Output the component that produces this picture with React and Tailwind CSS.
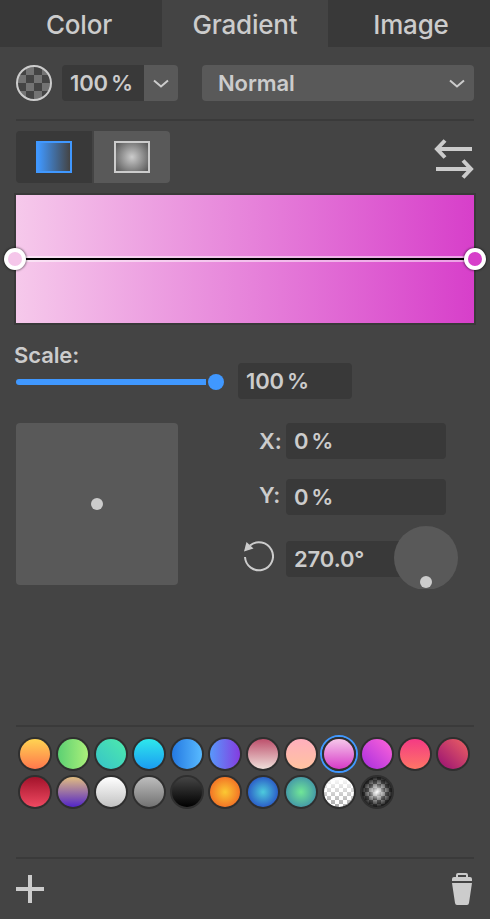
import clsx from 'clsx'

const TABS = [
  { name: 'Color', width: 'w-[162px]', pad: 'pr-[4px]' },
  { name: 'Gradient', width: 'w-[166px]', pad: 'pr-0' },
  { name: 'Image', width: 'w-[162px]', pad: 'pl-[4px]' },
]

const SWATCHES = [
  'bg-[linear-gradient(#ffd452,#ff774c)]',
  'bg-[linear-gradient(90deg,#5cd073,#abf07a)]',
  'bg-[linear-gradient(45deg,#36c3c9,#4eeaac)]',
  'bg-[linear-gradient(#2ee8ec,#1b9cf2)]',
  'bg-[linear-gradient(90deg,#2479e2,#58baff)]',
  'bg-[linear-gradient(90deg,#5898fb,#853ce0)]',
  'bg-[linear-gradient(#bd506c,#f0dfda)]',
  'bg-[linear-gradient(#ffafbd,#ffc3a0)]',
  'bg-[linear-gradient(#f6c8ea,#d73ac8)]',
  'bg-[linear-gradient(45deg,#a72de0,#ff65d8)]',
  'bg-[linear-gradient(#f43a84,#ff7566)]',
  'bg-[linear-gradient(45deg,#960f74,#ef6262)]',
  'bg-[linear-gradient(#a3132b,#ef4961)]',
  'bg-[linear-gradient(#e2bd80,#5225c8)]',
  'bg-[linear-gradient(#ffffff,#c2c2c2)]',
  'bg-[linear-gradient(#bdbdbd,#727272)]',
  'bg-[linear-gradient(#444444,#000000)]',
  'bg-[radial-gradient(circle_closest-side,#fbc933,#f37626)]',
  'bg-[radial-gradient(circle_closest-side,#4dcbdc,#2c60c8)]',
  'bg-[radial-gradient(circle_closest-side,#70e697,#469ca7)]',
  'bg-[linear-gradient(#ffffff,#ffffff00),repeating-conic-gradient(#ffffff_0_25%,#aaaaaa_0_50%)] bg-[size:100%_100%,8px_8px] bg-[position:0_0,3px_3px]',
  'bg-[radial-gradient(circle_closest-side,#ffffff,#70707066_55%,#101010e0),repeating-conic-gradient(#a0a0a0_0_25%,#3c3c3c_0_50%)] bg-[size:100%_100%,8px_8px] bg-[position:0_0,3px_3px]',
]

const SELECTED = 8

function Chevron() {
  return (
    <svg width="16" height="10" viewBox="0 0 16 10" fill="none" stroke="#ccc" strokeWidth="2">
      <path d="M1 1.500 8 7.500l7-6" />
    </svg>
  )
}

function Divider() {
  return <div className="h-0.5 shrink-0 bg-[#3a3a3a]" />
}

function Field({ value, className }) {
  return (
    <div className={clsx('flex h-9 items-center bg-[#393939] pl-2 [word-spacing:-2.5px]', className)}>
      {value}
    </div>
  )
}

function Handle({ color, className }) {
  return (
    <div className={clsx('absolute top-[53px] size-[22px] rounded-full border-4 border-white shadow-[0_0_2px_1px_rgba(0,0,0,0.4)]', color, className)} />
  )
}

function Tabs() {
  return (
    <div className="flex h-[47px] text-[26px] font-medium tracking-[-0.2px]">
      {TABS.map((tab) => (
        <div
          key={tab.name}
          className={clsx(
            'flex items-center justify-center pt-[3px]',
            tab.width,
            tab.pad,
            tab.name === 'Gradient' ? 'bg-[#444]' : 'bg-[#393939]'
          )}
        >
          {tab.name}
        </div>
      ))}
    </div>
  )
}

function BlendRow() {
  return (
    <div className="mt-[18px] flex h-9">
      <div className="size-9 rounded-full border-2 border-[#ccc] bg-[repeating-conic-gradient(#737373_0_25%,#444_0_50%)] bg-[size:16px_16px]" />
      <Field value="100 %" className="ml-2.5 w-[82px] rounded-l" />
      <div className="flex w-[34px] items-center justify-center rounded-r bg-[#595959] pt-0.5">
        <Chevron />
      </div>
      <div className="ml-6 flex grow items-center justify-between rounded bg-[#595959] pr-[9px] pl-4">
        <span>Normal</span>
        <span className="pt-0.5"><Chevron /></span>
      </div>
    </div>
  )
}

function TypeRow() {
  return (
    <div className="mt-2.5 flex h-[52px] items-center">
      <div className="flex h-full w-[76px] items-center justify-center rounded-l bg-[#393939]">
        <div className="h-8 w-9 border-2 border-[#4098ff] bg-[linear-gradient(90deg,#4098ff,#444)] bg-origin-padding" />
      </div>
      <div className="ml-0.5 flex h-full w-[76px] items-center justify-center rounded-r bg-[#595959]">
        <div className="h-8 w-9 border-2 border-[#ccc] bg-[radial-gradient(circle,#ccc,#5c5c5c_20px)]" />
      </div>
      <svg className="mt-1 ml-auto" width="40" height="42" viewBox="0 0 40 42" fill="none" stroke="#ccc" strokeWidth="4">
        <path d="M38 11H3M11 2.500 3 11l8 8.500M2 31h35M29 22.500 37 31l-8 8.500" />
      </svg>
    </div>
  )
}

function GradientBar() {
  return (
    <div className="relative -mx-0.5 mt-2.5 h-[132px] border-2 border-[#393939] bg-[linear-gradient(90deg,#f6c9eb,#d73fca)] bg-origin-padding">
      <div className="mt-[61px] h-1.5 border-y-2 border-white/50 bg-black bg-clip-padding" />
      <Handle color="bg-[#f5c6ea]" className="-left-3" />
      <Handle color="bg-[#d73fca]" className="-right-3" />
    </div>
  )
}

function ScaleRow() {
  return (
    <div className="mt-[18px] flex h-14">
      <div className="w-[222px]">
        <div className="-ml-0.5 h-9 leading-[25px]">Scale:</div>
        <div className="-mt-[5px] flex h-4 items-center">
          <div className="h-1.5 w-[190px] rounded-l-full bg-[#4098ff]" />
          <div className="ml-0.5 size-4 rounded-full bg-[#4098ff]" />
        </div>
      </div>
      <Field value="100 %" className="mt-5 w-[114px] rounded" />
    </div>
  )
}

function PositionPanel() {
  return (
    <div className="mt-6 flex h-[166px]">
      <div className="flex size-[162px] items-center justify-center rounded bg-[#595959]">
        <div className="size-3 rounded-full bg-[#ccc]" />
      </div>
      <div className="ml-auto flex w-[232px] flex-col">
        <div className="flex items-center">
          <span className="w-11 pl-[17px]">X:</span>
          <Field value="0 %" className="w-40 rounded" />
        </div>
        <div className="mt-5 flex items-center">
          <span className="-mt-1 w-11 pl-[17px]">Y:</span>
          <Field value="0 %" className="w-40 rounded" />
        </div>
        <div className="relative mt-[26px] flex h-9">
          <svg className="-mt-px mr-3" width="32" height="34" viewBox="0 0 32 34" fill="none" stroke="#ccc" strokeWidth="2">
            <path d="M3 17a14 14 0 1 0 5-11.500" />
            <path d="M2 11.500 4.500 2l7 6.500z" fill="#ccc" stroke="none" />
          </svg>
          <Field value="270.0°" className="w-36 rounded-l" />
          {/* angle dial sits over the end of the field */}
          <div className="absolute -top-[15px] left-[152px] h-[63px] w-16 overflow-hidden">
            <div className="flex size-16 items-end justify-center rounded-full bg-[#595959] pb-0.5">
              <div className="size-3 rounded-full bg-[#ccc]" />
            </div>
          </div>
        </div>
      </div>
    </div>
  )
}

function Swatches() {
  return (
    <div className="mt-2 flex h-[122px] flex-wrap content-start">
      {SWATCHES.map((fill, i) => (
        <div
          key={fill}
          className={clsx(
            'flex size-[38px] items-center justify-center rounded-full border-2',
            i === SELECTED ? 'border-[#4098ff]' : 'border-transparent'
          )}
        >
          <div className="rounded-full bg-[#2f2f2f] p-0.5">
            <div className={clsx('size-[30px] rounded-full', fill)} />
          </div>
        </div>
      ))}
    </div>
  )
}

function Footer() {
  return (
    <div className="mt-3.5 flex items-center justify-between">
      <svg width="28" height="28" viewBox="0 0 28 28" stroke="#ccc" strokeWidth="4">
        <path d="M14 0v28M0 14h28" />
      </svg>
      <svg className="mr-0.5" width="20" height="32" viewBox="0 0 20 32" fill="#ccc">
        <path d="M0 8V6q0-2 2-2h2V2q0-2 2-2h8q2 0 2 2v2h2q2 0 2 2v2zM6 4h8V2H6z" fillRule="evenodd" />
        <path d="M0 10h20l-3 20q-.3 2-2 2H5q-1.700 0-2-2z" />
      </svg>
    </div>
  )
}

function App() {
  return (
    <div className="h-[919px] w-[490px] overflow-hidden bg-[#444] font-['Inter',sans-serif] text-[22px] leading-none font-[560] tracking-[-0.1px] text-[#ccc]">
      <Tabs />
      <div className="px-4">
        <BlendRow />
        <div className="mt-[18px]"><Divider /></div>
        <TypeRow />
        <GradientBar />
        <ScaleRow />
        <PositionPanel />
        <div className="mt-[136px]"><Divider /></div>
        <Swatches />
        <Divider />
        <Footer />
      </div>
    </div>
  )
}

export default App
